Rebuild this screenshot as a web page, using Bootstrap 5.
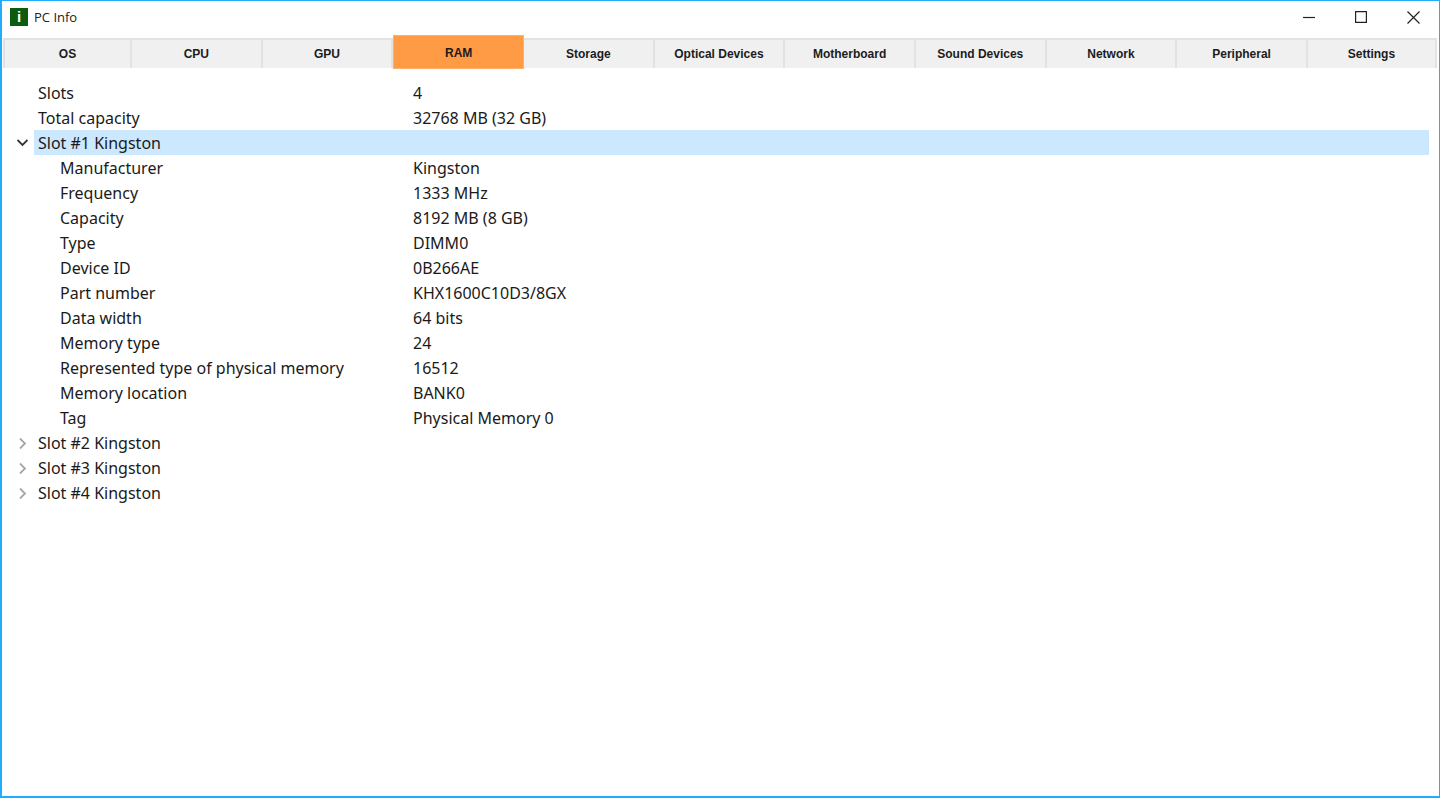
<!DOCTYPE html>
<html lang="en">
<head>
<meta charset="utf-8">
<title>PC Info</title>
<link href="https://cdn.jsdelivr.net/npm/bootstrap@5.3.0/dist/css/bootstrap.min.css" rel="stylesheet">
<style>
html,body{height:100%;overflow:hidden}
body{background:#fff;color:#1a1a1a;font-family:"Noto Sans","Open Sans",sans-serif}
.win-frame{height:798px;border:1px solid #20aefc;border-bottom-width:2px;border-left-width:2px}
.win-title{height:34px;padding-left:8px}
.app-logo{width:18px;height:18px;margin-bottom:2px;background:#0c5c10;color:#fff;font:bold 15px/18px "Liberation Sans",sans-serif;text-align:center}
.app-name{font-size:13px;margin-left:6px;margin-bottom:1px;color:#222;font-family:"Open Sans",sans-serif}
.win-btn{width:52px;height:34px;background:none;border:0;padding:0 0 2px}
.win-btn svg{display:block;margin:0 auto}
.tab-strip{padding:3px 2px 0 1px;height:34px}
.tab-item{flex:0 0 130.67px;height:30px;background:#f0f0f0;border:0 solid #e2e2e2;border-width:2px 2px 0 0;font:bold 12px "Liberation Sans",sans-serif;color:#1c1c1c;display:flex;align-items:center;justify-content:center}
.tab-item:first-child{flex:0 0 129px;border-left-width:2px}
.tab-item:last-child{flex:1 1 0}
.tab-item.tab-on{background:#ff9a45;border:1px solid #ffb06d;height:34px;margin-top:-3px;margin-bottom:-1px;padding-top:2px;color:#1a1a1a}
.tree-box{padding-top:11px;font-size:16px}
.tree-row{height:25px;line-height:25px;padding-top:1px}
.tree-row.sel{background:#cce8ff;margin-right:10px}
.twist{width:32px;flex:none;padding-left:15px}
.label-cell{width:379px;flex:none;padding-left:4px;white-space:nowrap}
.sub .label-cell{padding-left:26px}
.twist svg{display:block;margin-top:7px}
</style>
</head>
<body>
<div class="win-frame d-flex flex-column">
  <div class="win-title d-flex align-items-center">
    <div class="app-logo">i</div>
    <div class="app-name">PC Info</div>
    <div class="d-flex ms-auto">
      <button class="win-btn" aria-label="Minimize"><svg width="12" height="12" viewBox="0 0 12 12"><path d="M0 6.5h12" stroke="#222" stroke-width="1.2" fill="none"/></svg></button>
      <button class="win-btn" aria-label="Maximize"><svg width="12" height="12" viewBox="0 0 12 12"><path d="M.6.6h10.8v10.8H.6z" stroke="#222" stroke-width="1.2" fill="none"/></svg></button>
      <button class="win-btn" aria-label="Close"><svg width="13" height="13" viewBox="0 0 13 13"><path d="M.5.5l12 12M12.5.5l-12 12" stroke="#222" stroke-width="1.2" fill="none"/></svg></button>
    </div>
  </div>
  <div class="tab-strip d-flex">
    <div class="tab-item">OS</div>
    <div class="tab-item">CPU</div>
    <div class="tab-item">GPU</div>
    <div class="tab-item tab-on">RAM</div>
    <div class="tab-item">Storage</div>
    <div class="tab-item">Optical Devices</div>
    <div class="tab-item">Motherboard</div>
    <div class="tab-item">Sound Devices</div>
    <div class="tab-item">Network</div>
    <div class="tab-item">Peripheral</div>
    <div class="tab-item">Settings</div>
  </div>
  <div class="tree-box">
    <div class="tree-row d-flex"><div class="twist"></div><div class="label-cell">Slots</div><div>4</div></div>
    <div class="tree-row d-flex"><div class="twist"></div><div class="label-cell">Total capacity</div><div>32768 MB (32 GB)</div></div>
    <div class="d-flex"><div class="twist"><svg width="11" height="11" viewBox="0 0 11 11"><path d="M.5 3l5 5 5-5" stroke="#333" stroke-width="1.8" fill="none"/></svg></div><div class="tree-row sel flex-grow-1 label-cell">Slot #1 Kingston</div></div>
    <div class="tree-row sub d-flex"><div class="twist"></div><div class="label-cell">Manufacturer</div><div>Kingston</div></div>
    <div class="tree-row sub d-flex"><div class="twist"></div><div class="label-cell">Frequency</div><div>1333 MHz</div></div>
    <div class="tree-row sub d-flex"><div class="twist"></div><div class="label-cell">Capacity</div><div>8192 MB (8 GB)</div></div>
    <div class="tree-row sub d-flex"><div class="twist"></div><div class="label-cell">Type</div><div>DIMM0</div></div>
    <div class="tree-row sub d-flex"><div class="twist"></div><div class="label-cell">Device ID</div><div>0B266AE</div></div>
    <div class="tree-row sub d-flex"><div class="twist"></div><div class="label-cell">Part number</div><div>KHX1600C10D3/8GX</div></div>
    <div class="tree-row sub d-flex"><div class="twist"></div><div class="label-cell">Data width</div><div>64 bits</div></div>
    <div class="tree-row sub d-flex"><div class="twist"></div><div class="label-cell">Memory type</div><div>24</div></div>
    <div class="tree-row sub d-flex"><div class="twist"></div><div class="label-cell">Represented type of physical memory</div><div>16512</div></div>
    <div class="tree-row sub d-flex"><div class="twist"></div><div class="label-cell">Memory location</div><div>BANK0</div></div>
    <div class="tree-row sub d-flex"><div class="twist"></div><div class="label-cell">Tag</div><div>Physical Memory 0</div></div>
    <div class="d-flex tree-row"><div class="twist"><svg width="11" height="11" viewBox="0 0 11 11"><path d="M3 .5l5 5-5 5" stroke="#a6a6a6" stroke-width="1.8" fill="none"/></svg></div><div class="label-cell">Slot #2 Kingston</div></div>
    <div class="d-flex tree-row"><div class="twist"><svg width="11" height="11" viewBox="0 0 11 11"><path d="M3 .5l5 5-5 5" stroke="#a6a6a6" stroke-width="1.8" fill="none"/></svg></div><div class="label-cell">Slot #3 Kingston</div></div>
    <div class="d-flex tree-row"><div class="twist"><svg width="11" height="11" viewBox="0 0 11 11"><path d="M3 .5l5 5-5 5" stroke="#a6a6a6" stroke-width="1.8" fill="none"/></svg></div><div class="label-cell">Slot #4 Kingston</div></div>
  </div>
</div>
</body>
</html>
